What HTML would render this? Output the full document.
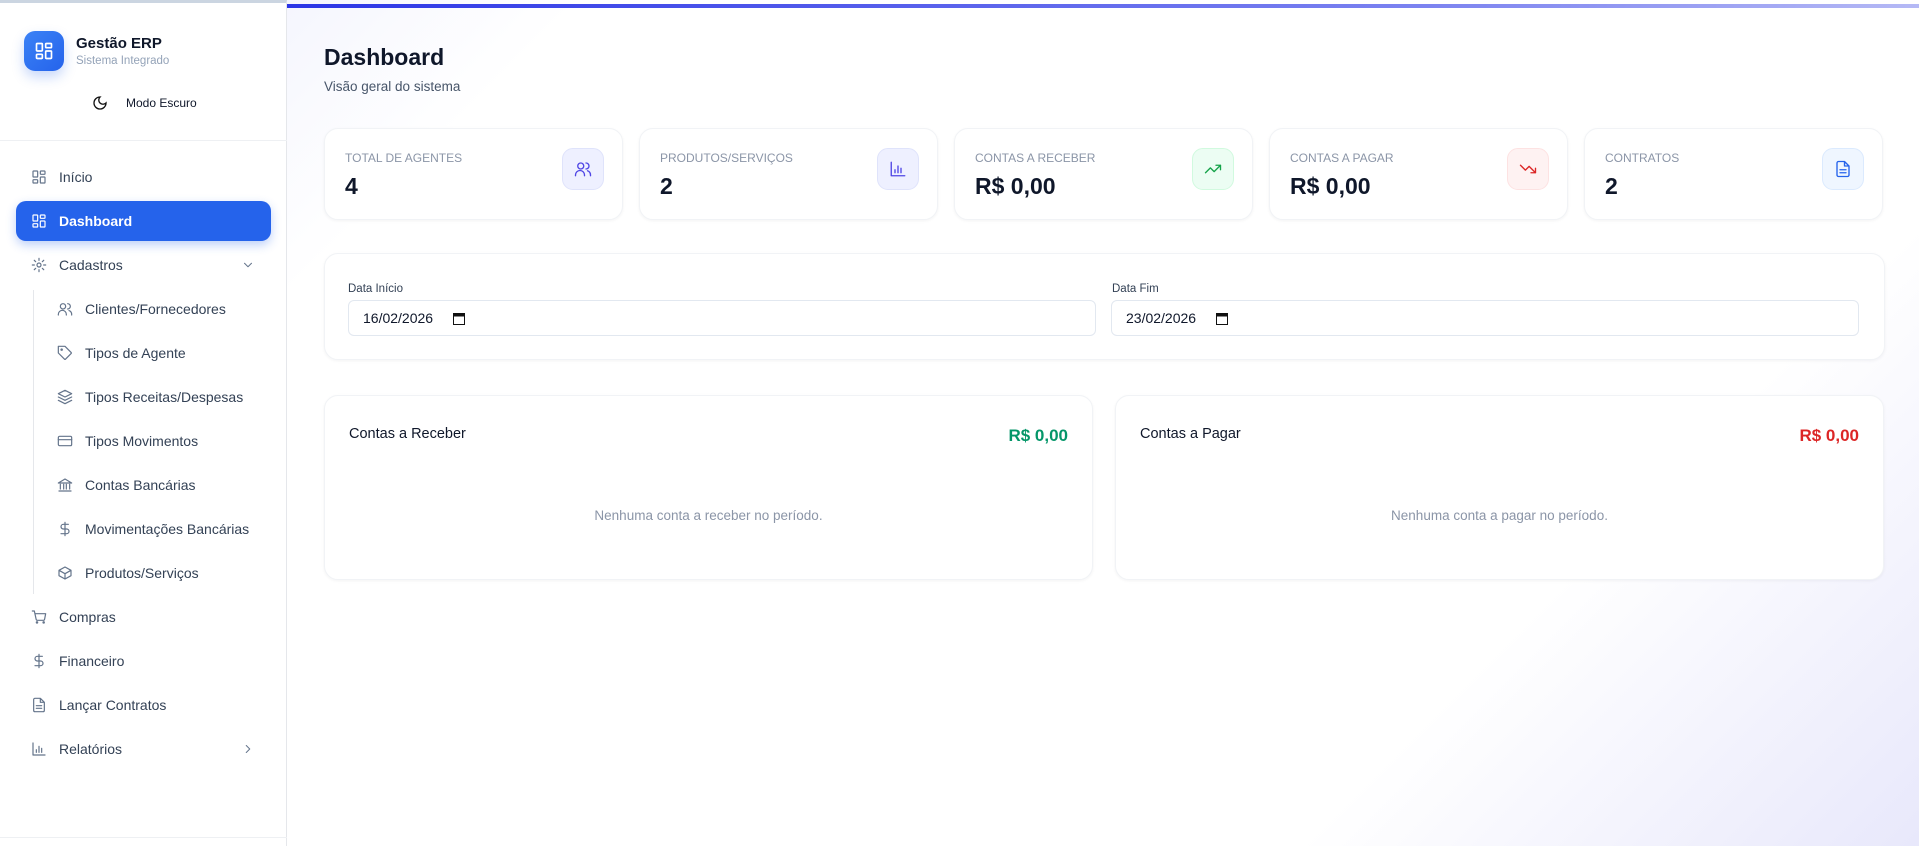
<!DOCTYPE html>
<html><head><meta charset="utf-8">
<style>
*{box-sizing:border-box;margin:0;padding:0}
body{width:1919px;height:846px;overflow:hidden;font-family:"Liberation Sans",sans-serif;background:#fff;position:relative;color:#0f172a}
.side{position:absolute;left:0;top:0;width:287px;height:846px;background:#fff;border-right:1px solid #e5e7eb;border-top:3px solid #cbd5e1}
.logo{position:absolute;left:24px;top:28px;width:40px;height:40px;border-radius:11px;background:linear-gradient(135deg,#3b82f6,#2563eb);box-shadow:0 6px 12px rgba(37,99,235,.25);display:flex;align-items:center;justify-content:center}
.t1{position:absolute;left:76px;top:32px;font-weight:bold;font-size:15px}
.t2{position:absolute;left:76px;top:52px;font-size:11.5px;color:#94a3b8}
.dark{position:absolute;left:92px;top:92px;font-size:12px;display:flex;align-items:center;gap:18px}
.sep{position:absolute;left:0;width:287px;height:1px;background:#eef0f3}
.nav{position:absolute;left:16px;width:255px;height:40px;display:flex;align-items:center;padding-left:15px;gap:12px;font-size:14px;color:#334155;border-radius:10px}
.nav svg{width:16px;height:16px;stroke:#64748b;fill:none;stroke-width:1.8;stroke-linecap:round;stroke-linejoin:round}
.nav.act{background:#2563eb;color:#fff;font-weight:bold;box-shadow:0 4px 10px rgba(37,99,235,.3)}
.nav.act svg{stroke:#fff}
.sub{left:42px;width:229px;padding-left:15px}
.vline{position:absolute;left:33px;top:290px;width:1px;height:304px;background:#e5e7eb}
.main{position:absolute;left:287px;top:0;right:0;height:846px;background:linear-gradient(135deg,#f5f6fe 0%,#fff 12%,#fff 75%,#e8e8fb 100%)}
.bar{position:absolute;left:287px;top:4px;right:0;height:4px;background:linear-gradient(90deg,#2b35e6,#7c83f0 70%,#b5b9f5)}
h1{position:absolute;left:324px;top:44px;font-size:23px;font-weight:bold}
.subt{position:absolute;left:324px;top:79px;font-size:13.5px;color:#475569}
.card{position:absolute;background:#fff;border-radius:14px;box-shadow:0 1px 3px rgba(15,23,42,.05);border:1px solid #f1f3f6}
.stat{top:128px;width:299px;height:92px}
.stat .l{position:absolute;left:20px;top:22px;font-size:12px;color:#8b95a7}
.stat .v{position:absolute;left:20px;top:44px;font-size:23px;font-weight:bold}
.stat .ic{position:absolute;right:18px;top:19px;width:42px;height:42px;border-radius:11px;display:flex;align-items:center;justify-content:center}
.ic svg{width:18px;height:18px;fill:none;stroke-width:1.8;stroke-linecap:round;stroke-linejoin:round}
.lbl{position:absolute;font-size:11.5px;color:#334155;top:283px}
.inp{position:absolute;top:300px;height:36px;border:1px solid #e2e8f0;border-radius:6px;font-size:14px;padding:0 0 0 14px;background:#fff;display:flex;align-items:center}
.inp svg{margin-left:20px}
.acc{top:395px;height:185px}
.acc .h{position:absolute;left:24px;top:30px;font-size:14.5px}
.acc .m{position:absolute;right:24px;top:30px;font-size:17px;font-weight:bold}
.acc .e{position:absolute;left:0;right:0;top:112px;text-align:center;font-size:13.5px;color:#8b95a7}
</style></head><body>
<div class="main"></div><div class="bar"></div>
<div class="side">
<div class="logo"><svg width="20" height="20" viewBox="0 0 24 24" fill="none" stroke="#fff" stroke-width="2"><rect x="3" y="3" width="7" height="9" rx="1"/><rect x="14" y="3" width="7" height="5" rx="1"/><rect x="14" y="12" width="7" height="9" rx="1"/><rect x="3" y="16" width="7" height="5" rx="1"/></svg></div>
<div class="t1">Gestão ERP</div><div class="t2">Sistema Integrado</div>
<div class="dark"><svg width="16" height="16" viewBox="0 0 24 24" fill="none" stroke="#111" stroke-width="2"><path d="M12 3a6 6 0 0 0 9 9 9 9 0 1 1-9-9z"/></svg><span>Modo Escuro</span></div>
</div>
<div class="sep" style="top:140px"></div>
<div class="sep" style="top:837px"></div>
<div class="vline"></div>
<div class="nav" style="top:157px"><svg viewBox="0 0 24 24"><rect x="3" y="3" width="7" height="9" rx="1"/><rect x="14" y="3" width="7" height="5" rx="1"/><rect x="14" y="12" width="7" height="9" rx="1"/><rect x="3" y="16" width="7" height="5" rx="1"/></svg>Início</div>
<div class="nav act" style="top:201px"><svg viewBox="0 0 24 24"><rect x="3" y="3" width="7" height="9" rx="1"/><rect x="14" y="3" width="7" height="5" rx="1"/><rect x="14" y="12" width="7" height="9" rx="1"/><rect x="3" y="16" width="7" height="5" rx="1"/></svg>Dashboard</div>
<div class="nav" style="top:245px"><svg viewBox="0 0 24 24"><circle cx="12" cy="12" r="3"/><path d="M12 2v3M12 19v3M4.9 4.9l2.1 2.1M17 17l2.1 2.1M2 12h3M19 12h3M4.9 19.1L7 17M17 7l2.1-2.1"/></svg>Cadastros<svg style="position:absolute;right:16px;width:14px" viewBox="0 0 24 24"><path d="M6 9l6 6 6-6"/></svg></div>
<div class="nav sub" style="top:289px"><svg viewBox="0 0 24 24"><circle cx="9" cy="8" r="4"/><path d="M2 21v-1a6 6 0 0 1 12 0v1M16 4a4 4 0 0 1 0 8M22 21v-1a6 6 0 0 0-4-5.6"/></svg>Clientes/Fornecedores</div>
<div class="nav sub" style="top:333px"><svg viewBox="0 0 24 24"><path d="M12 2H2v10l9.3 9.3a1 1 0 0 0 1.4 0l8.6-8.6a1 1 0 0 0 0-1.4z"/><circle cx="7" cy="7" r="1"/></svg>Tipos de Agente</div>
<div class="nav sub" style="top:377px"><svg viewBox="0 0 24 24"><path d="M12 2L2 7l10 5 10-5z M2 12l10 5 10-5 M2 17l10 5 10-5"/></svg>Tipos Receitas/Despesas</div>
<div class="nav sub" style="top:421px"><svg viewBox="0 0 24 24"><rect x="2" y="5" width="20" height="14" rx="2"/><path d="M2 10h20"/></svg>Tipos Movimentos</div>
<div class="nav sub" style="top:465px"><svg viewBox="0 0 24 24"><path d="M3 21h18M5 18v-7M10 18v-7M14 18v-7M19 18v-7M2 9l10-6 10 6z"/></svg>Contas Bancárias</div>
<div class="nav sub" style="top:509px"><svg viewBox="0 0 24 24"><path d="M12 2v20M17 5H9.5a3.5 3.5 0 0 0 0 7h5a3.5 3.5 0 0 1 0 7H6"/></svg>Movimentações Bancárias</div>
<div class="nav sub" style="top:553px"><svg viewBox="0 0 24 24"><path d="M21 8l-9-5-9 5v8l9 5 9-5z M3 8l9 5 9-5 M12 13v8"/></svg>Produtos/Serviços</div>
<div class="nav" style="top:597px"><svg viewBox="0 0 24 24"><circle cx="9" cy="20" r="1"/><circle cx="19" cy="20" r="1"/><path d="M2 3h3l2.7 12.4a2 2 0 0 0 2 1.6h8.7a2 2 0 0 0 2-1.6L22 7H6"/></svg>Compras</div>
<div class="nav" style="top:641px"><svg viewBox="0 0 24 24"><path d="M12 2v20M17 5H9.5a3.5 3.5 0 0 0 0 7h5a3.5 3.5 0 0 1 0 7H6"/></svg>Financeiro</div>
<div class="nav" style="top:685px"><svg viewBox="0 0 24 24"><path d="M14 2H6a2 2 0 0 0-2 2v16a2 2 0 0 0 2 2h12a2 2 0 0 0 2-2V8z M14 2v6h6 M8 13h8 M8 17h8"/></svg>Lançar Contratos</div>
<div class="nav" style="top:729px"><svg viewBox="0 0 24 24"><path d="M3 3v18h18M8 17v-4M12 17V8M16 17v-6"/></svg>Relatórios<svg style="position:absolute;right:16px;width:14px" viewBox="0 0 24 24"><path d="M9 6l6 6-6 6"/></svg></div>

<h1>Dashboard</h1><div class="subt">Visão geral do sistema</div>

<div class="card stat" style="left:324px"><div class="l">TOTAL DE AGENTES</div><div class="v">4</div><div class="ic" style="background:#eef0ff;border:1px solid #dfe3fb"><svg viewBox="0 0 24 24" stroke="#4f46e5"><circle cx="9" cy="8" r="4"/><path d="M2 21v-1a6 6 0 0 1 12 0v1M16 4a4 4 0 0 1 0 8M22 21v-1a6 6 0 0 0-4-5.6"/></svg></div></div>
<div class="card stat" style="left:639px"><div class="l">PRODUTOS/SERVIÇOS</div><div class="v">2</div><div class="ic" style="background:#eef0ff;border:1px solid #dfe3fb"><svg viewBox="0 0 24 24" stroke="#4f46e5"><path d="M3 3v18h18M8 17v-4M12 17V8M16 17v-6"/></svg></div></div>
<div class="card stat" style="left:954px"><div class="l">CONTAS A RECEBER</div><div class="v">R$ 0,00</div><div class="ic" style="background:#ecfdf3;border:1px solid #d1fadf"><svg viewBox="0 0 24 24" stroke="#16a34a"><path d="M22 7l-8.5 8.5-5-5L2 17M16 7h6v6"/></svg></div></div>
<div class="card stat" style="left:1269px"><div class="l">CONTAS A PAGAR</div><div class="v">R$ 0,00</div><div class="ic" style="background:#fef2f2;border:1px solid #fde2e2"><svg viewBox="0 0 24 24" stroke="#dc2626"><path d="M22 17l-8.5-8.5-5 5L2 7M16 17h6v-6"/></svg></div></div>
<div class="card stat" style="left:1584px"><div class="l">CONTRATOS</div><div class="v">2</div><div class="ic" style="background:#eff6ff;border:1px solid #dbeafe"><svg viewBox="0 0 24 24" stroke="#2563eb"><path d="M14 2H6a2 2 0 0 0-2 2v16a2 2 0 0 0 2 2h12a2 2 0 0 0 2-2V8z M14 2v6h6 M8 13h8 M8 17h8"/></svg></div></div>

<div class="card" style="left:324px;top:253px;width:1561px;height:107px"></div>
<div class="lbl" style="left:348px">Data Início</div>
<div class="lbl" style="left:1112px">Data Fim</div>
<div class="inp" style="left:348px;width:748px">16/02/2026<svg width="12" height="13" viewBox="0 0 12 13"><rect x="0.5" y="1.5" width="11" height="11" fill="none" stroke="#111"/><rect x="0.5" y="1.5" width="11" height="3" fill="#111"/></svg></div>
<div class="inp" style="left:1111px;width:748px">23/02/2026<svg width="12" height="13" viewBox="0 0 12 13"><rect x="0.5" y="1.5" width="11" height="11" fill="none" stroke="#111"/><rect x="0.5" y="1.5" width="11" height="3" fill="#111"/></svg></div>

<div class="card acc" style="left:324px;width:769px"><div class="h">Contas a Receber</div><div class="m" style="color:#059669">R$ 0,00</div><div class="e">Nenhuma conta a receber no período.</div></div>
<div class="card acc" style="left:1115px;width:769px"><div class="h">Contas a Pagar</div><div class="m" style="color:#dc2626">R$ 0,00</div><div class="e">Nenhuma conta a pagar no período.</div></div>
</body></html>
